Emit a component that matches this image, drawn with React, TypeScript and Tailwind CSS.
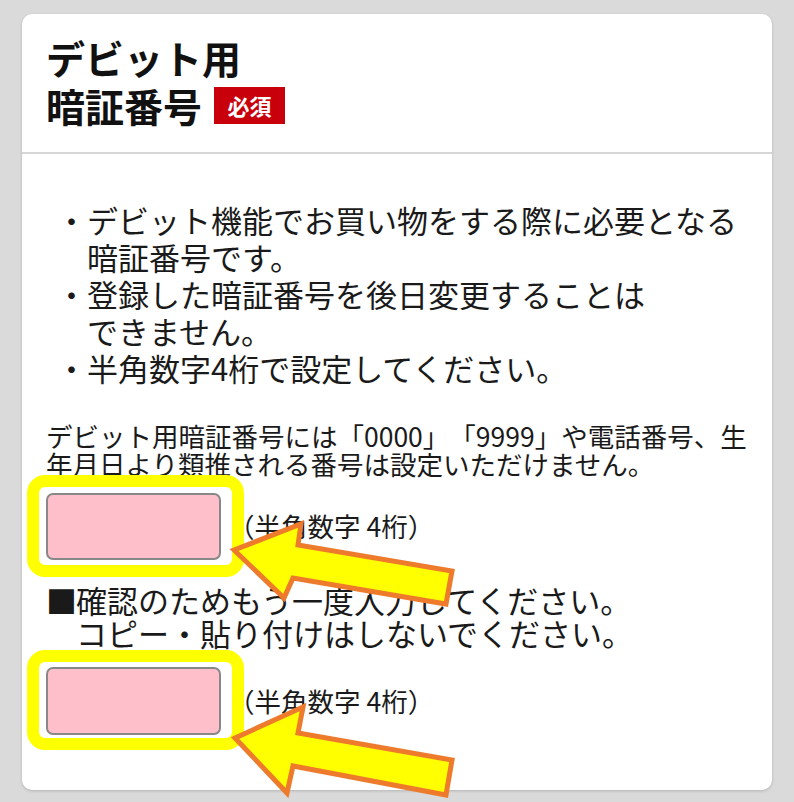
export default function App() {
  return (
    <div className="relative w-[794px] h-[802px] overflow-hidden bg-[#dadada] pt-[14px] pl-[22px] font-['Noto_Sans_CJK_JP','Noto_Sans',sans-serif] text-[#1a1a1a] [text-spacing-trim:space-all]">
      <div className="w-[750px] h-[776px] bg-white rounded-[10px] shadow-[0_1px_3px_rgba(0,0,0,0.18)]">
        <div className="px-[24px] pt-[19px] pb-[23px] border-b-2 border-[#d6d6d6]">
          <h1 className="text-[39px] font-bold leading-[48px] text-[#111]">デビット用</h1>
          <div className="flex items-center">
            <span className="text-[39px] font-bold leading-[48px] text-[#111]">暗証番号</span>
            <span className="ml-[12px] h-[37px] w-[71px] bg-[#c8000b] text-white text-[22px] font-bold leading-none flex items-center justify-center">
              必須
            </span>
          </div>
        </div>
        <div className="px-[24px] pt-[47px]">
          <ul className="pl-[10px] text-[31px] leading-[37px]">
            <li className="flex">
              <span className="w-[31px] shrink-0">・</span>
              <span>
                デビット機能でお買い物をする際に必要となる
                <br />
                暗証番号です。
              </span>
            </li>
            <li className="flex">
              <span className="w-[31px] shrink-0">・</span>
              <span>
                登録した暗証番号を後日変更することは
                <br />
                できません。
              </span>
            </li>
            <li className="flex">
              <span className="w-[31px] shrink-0">・</span>
              <span>半角数字4桁で設定してください。</span>
            </li>
          </ul>
          <p className="mt-[36px] text-[26.5px] leading-[28px] whitespace-nowrap">
            デビット用暗証番号には「0000」「9999」や電話番号、生
            <br />
            年月日より類推される番号は設定いただけません。
          </p>
          <div className="mt-[15px] flex items-center">
            <div className="relative">
              <div className="absolute -left-[19px] -top-[18px] -right-[23px] -bottom-[17px] border-[12px] border-[#ffff00] rounded-[18px]" />
              <div className="relative w-[175px] h-[67px] bg-[#ffbfca] border-2 border-[#888888] rounded-[7px]" />
            </div>
            <span className="ml-[7px] text-[26.5px] leading-none">（半角数字 4桁）</span>
          </div>
          <div className="mt-[23px] text-[31px] leading-[33px] whitespace-nowrap">
            <div className="flex">
              <span className="w-[30px] shrink-0">■</span>
              <span>確認のためもう一度入力してください。</span>
            </div>
            <div className="flex">
              <span className="w-[30px] shrink-0"></span>
              <span>コピー・貼り付けはしないでください。</span>
            </div>
          </div>
          <div className="mt-[18px] flex items-center">
            <div className="relative">
              <div className="absolute -left-[19px] -top-[17px] -right-[23px] -bottom-[15px] border-[12px] border-[#ffff00] rounded-[18px]" />
              <div className="relative w-[175px] h-[68px] bg-[#ffbfca] border-2 border-[#888888] rounded-[7px]" />
            </div>
            <span className="ml-[7px] text-[26.5px] leading-none">（半角数字 4桁）</span>
          </div>
        </div>
      </div>
      <svg
        className="absolute left-0 top-0 pointer-events-none"
        width="794"
        height="802"
        viewBox="0 0 794 802"
      >
        <polygon
          points="234,550 301,524 298,545 452,571 446,604 293,578 284,598"
          fill="#ffff00"
          stroke="#ee7b2c"
          strokeWidth="5"
          strokeLinejoin="miter"
        />
        <polygon
          points="235,738 303,707 298,733 452,760 446,795 293,766 287,793"
          fill="#ffff00"
          stroke="#ee7b2c"
          strokeWidth="5"
          strokeLinejoin="miter"
        />
      </svg>
    </div>
  );
}
